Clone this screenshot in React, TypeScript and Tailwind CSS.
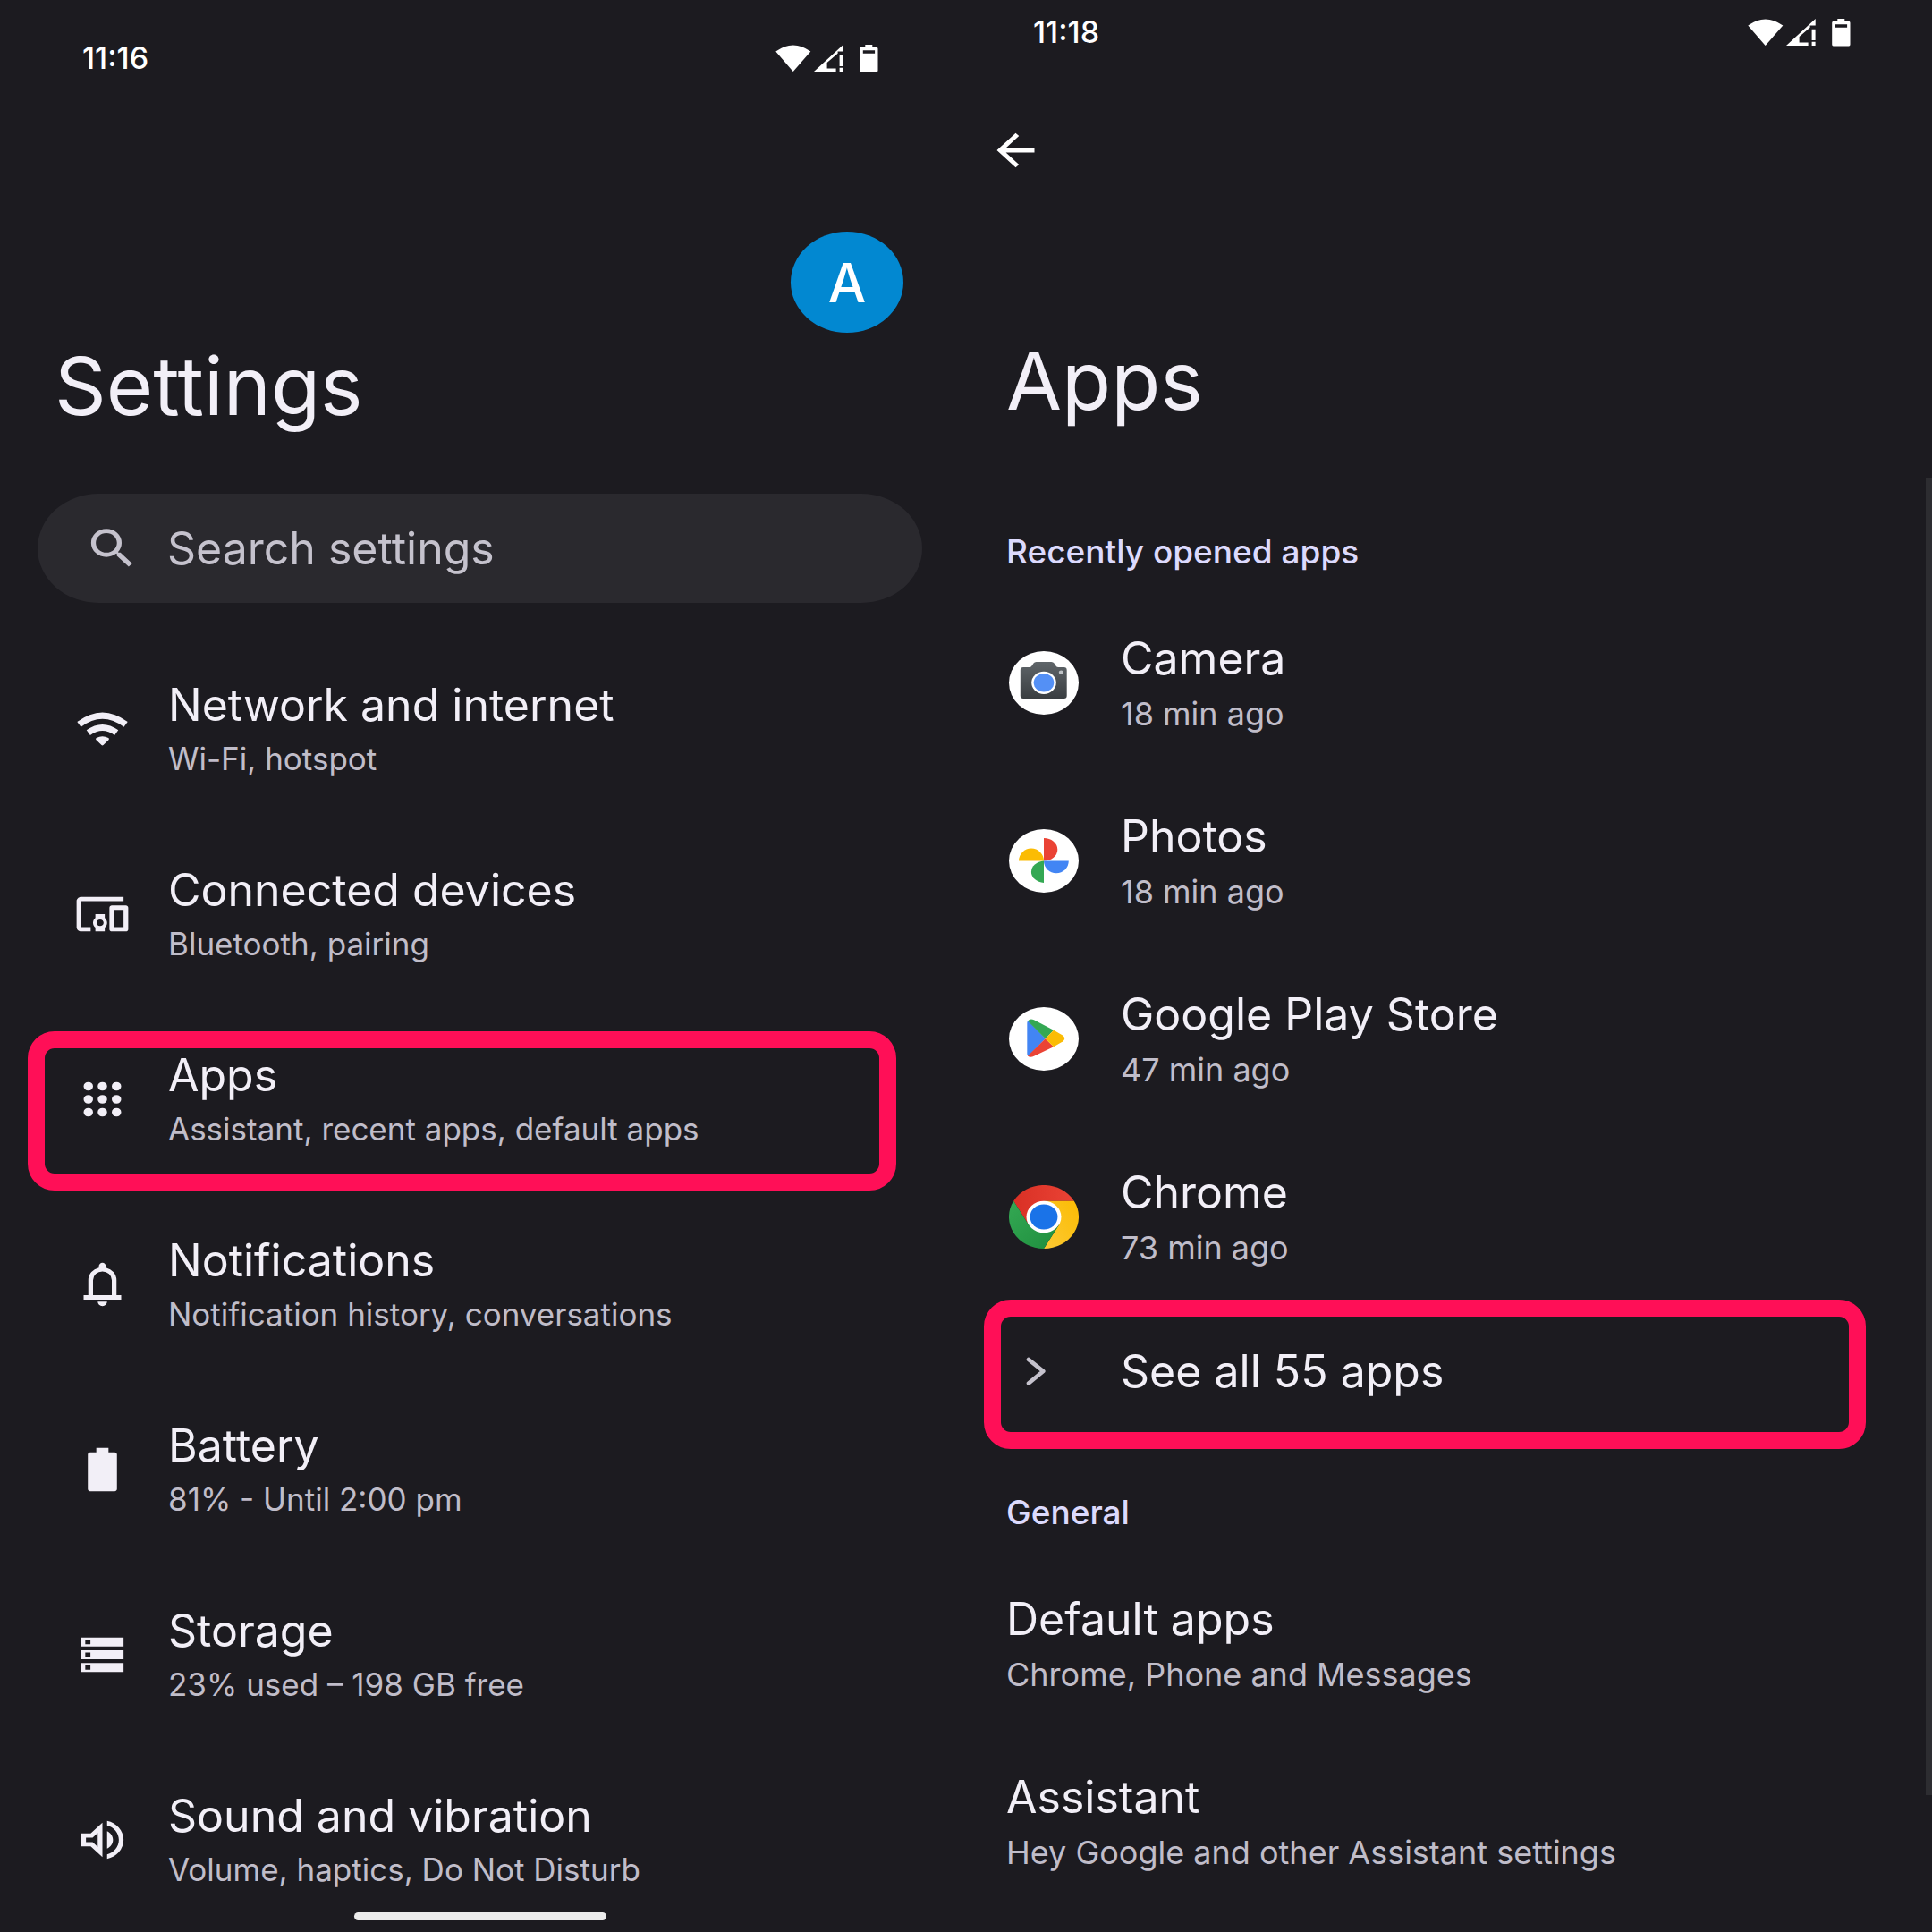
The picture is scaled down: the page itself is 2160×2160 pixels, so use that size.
import type { ReactNode } from "react";

function Glyph({ d }: { d: string }) {
  return (
    <svg viewBox="0 0 24 24" preserveAspectRatio="none" className="h-[58px] w-[63px] shrink-0 fill-current" aria-hidden="true">
      <path fillRule="evenodd" d={d} />
    </svg>
  );
}

function WifiGlyph() {
  return (
    <svg viewBox="-3 -11 63 58" className="h-[58px] w-[63px] shrink-0" fill="none" stroke="currentColor" aria-hidden="true">
      <path d="M2.4 12.9Q28.5-6.7 54.600 12.900" strokeWidth="7" />
      <path d="M12.8 22.2Q28.5 10.800 44.200 22.200" strokeWidth="7" />
      <path d="M22.5 29.2Q28.5 26 34.5 29.2L28.5 35Z" fill="currentColor" strokeWidth="2.8" strokeLinejoin="round" />
    </svg>
  );
}

const glyphs = {
  search:
    "M15.5 14h-.79l-.28-.27A6.471 6.471 0 0 0 16 9.5 6.5 6.5 0 1 0 9.5 16c1.61 0 3.09-.59 4.23-1.57l.27.28v.79l5 4.99L20.49 19l-4.99-5zm-6 0C7.01 14 5 11.99 5 9.5S7.01 5 9.5 5 14 7.01 14 9.5 11.99 14 9.5 14z",
  back: "M20 11H7.83l5.59-5.59L12 4l-8 8 8 8 1.41-1.41L7.83 13H20v-2z",
  devices:
    "M3 6h18V4H3c-1.1 0-2 .9-2 2v12c0 1.1.9 2 2 2h4v-2H3V6zm10 6H9v1.78c-.61.55-1 1.33-1 2.22s.39 1.67 1 2.22V20h4v-1.78c.61-.55 1-1.34 1-2.22s-.39-1.67-1-2.22V12zm-2 5.5c-.83 0-1.5-.67-1.5-1.5s.67-1.5 1.5-1.5 1.5.67 1.5 1.5-.67 1.5-1.5 1.5zM22 8h-6c-.5 0-1 .5-1 1v10c0 .5.5 1 1 1h6c.5 0 1-.5 1-1V9c0-.5-.5-1-1-1zm-1 10h-4v-8h4v8z",
  apps:
    "M6 4a2 2 0 1 0 0 4 2 2 0 0 0 0-4zm6 0a2 2 0 1 0 0 4 2 2 0 0 0 0-4zm6 0a2 2 0 1 0 0 4 2 2 0 0 0 0-4zM6 10a2 2 0 1 0 0 4 2 2 0 0 0 0-4zm6 0a2 2 0 1 0 0 4 2 2 0 0 0 0-4zm6 0a2 2 0 1 0 0 4 2 2 0 0 0 0-4zM6 16a2 2 0 1 0 0 4 2 2 0 0 0 0-4zm6 0a2 2 0 1 0 0 4 2 2 0 0 0 0-4zm6 0a2 2 0 1 0 0 4 2 2 0 0 0 0-4z",
  bell:
    "M4 19v-2h2v-7q0-2.075 1.25-3.687T10.5 4.2v-.7q0-.625.438-1.062T12 2t1.063.438T13.5 3.5v.7q2 .5 3.25 2.113T18 10v7h2v2ZM12 22q-.825 0-1.412-.587T10 20h4q0 .825-.587 1.413T12 22Zm-4-5h8v-7q0-1.65-1.175-2.825T12 6 9.175 7.175 8 10Z",
  battery:
    "M17.2 4H14.6V2H9.4v2H6.8C6.25 4 5.8 4.45 5.8 5v16c0 .55.45 1 1 1h10.4c.55 0 1-.45 1-1V5c0-.55-.45-1-1-1z",
  storage:
    "M3 4h18v4.2H3zM4.7 5.1v2h2.2v-2zM3 9.9h18v4.2H3zM4.7 11v2h2.2v-2zM3 15.8h18V20H3zM4.7 16.9v2h2.2v-2z",
  sound:
    "M3 9v6h4l5 5V4L7 9H3zm7-.17v6.34L7.83 13H5v-2h2.83L10 8.83zM16.5 12c0-1.77-1.02-3.29-2.5-4.03v8.05c1.48-.73 2.5-2.25 2.5-4.02zM14 3.23v2.06c2.89.86 5 3.54 5 6.71s-2.11 5.85-5 6.71v2.06c4.01-.91 7-4.49 7-8.77s-2.99-7.86-7-8.77z",
};

function StatusBar({ time }: { time: string }) {
  return (
    <header className="flex h-[50px] items-center justify-between text-white">
      <time className="text-[34px] leading-[48px] font-medium">{time}</time>
      <div className="flex items-center" aria-hidden="true">
        <svg viewBox="0 0 40 30" className="h-[30px] w-[40px] fill-current">
          <path d="M.3 7.6Q19.7-6.6 39.3 7.6L19.7 30Z" />
        </svg>
        <svg viewBox="0 0 33 30" className="ml-[3px] h-[30px] w-[33px] fill-current">
          <path d="M0 30 32.7 0v7.400H26.600v2.400L14.600 20v6.400h10V30ZM28.600 11.700h4V24h-4zM28.600 25.800h4V30h-4z" />
        </svg>
        <svg viewBox="0 0 21 31" className="ml-[18px] h-[31px] w-[21px] fill-current">
          <path fillRule="evenodd" d="M6.3 0h8v2.8h4.6Q20.5 2.8 20.5 4.4v24.4Q20.5 30.5 19 30.5H1.7Q.2 30.5.2 28.8V4.4Q.2 2.8 1.8 2.8h4.5ZM3.8 6.2v3.6h13.3V6.2Z" />
        </svg>
      </div>
    </header>
  );
}

function Highlight({ className }: { className: string }) {
  return <span className={`pointer-events-none absolute rounded-[30px] border-[19px] border-[#ff0f57] ${className}`} />;
}

type Setting = { title: string; detail: string; icon: ReactNode; marked?: boolean };

const settings: Setting[] = [
  { title: "Network and internet", detail: "Wi-Fi, hotspot", icon: <WifiGlyph /> },
  { title: "Connected devices", detail: "Bluetooth, pairing", icon: <Glyph d={glyphs.devices} /> },
  { title: "Apps", detail: "Assistant, recent apps, default apps", icon: <Glyph d={glyphs.apps} />, marked: true },
  { title: "Notifications", detail: "Notification history, conversations", icon: <Glyph d={glyphs.bell} /> },
  { title: "Battery", detail: "81% - Until 2:00 pm", icon: <Glyph d={glyphs.battery} /> },
  { title: "Storage", detail: "23% used – 198 GB free", icon: <Glyph d={glyphs.storage} /> },
  { title: "Sound and vibration", detail: "Volume, haptics, Do Not Disturb", icon: <Glyph d={glyphs.sound} /> },
];

function SettingsScreen() {
  return (
    <section className="relative flex min-w-0 flex-1 flex-col pt-10">
      <div className="pr-[98px] pl-[92px]">
        <StatusBar time="11:16" />
      </div>
      <button type="button" aria-label="Account" className="mt-[169px] mr-[70px] flex h-[113px] w-[126px] items-center justify-center self-end rounded-[50%] bg-[#0288d1] text-[60px] leading-none font-medium text-white">
        A
      </button>
      <h1 className="mt-[6px] pl-[61px] text-[90px] leading-[108px]">Settings</h1>
      <label className="mt-[66px] mr-[49px] ml-[42px] flex h-[122px] items-center rounded-[68px/61px] bg-[#2a292e] pr-10 pl-[52px] text-[#c5c2cd]">
        <Glyph d={glyphs.search} />
        <input type="search" aria-label="Search settings" placeholder="Search settings" className="ml-[30px] min-w-0 flex-1 bg-transparent text-[50px] leading-[60px] outline-none placeholder:text-[#c5c2cd] placeholder:opacity-100" />
      </label>
      <ul className="mt-[37px]">
        {settings.map((s) => (
          <li key={s.title} className="relative">
            <a href="#" className="flex items-center py-[45px] pl-[83px]">
              {s.icon}
              <span className="ml-[42px] flex flex-col gap-1.5 pt-0.5">
                <span className="text-[50px] leading-[60px]">{s.title}</span>
                <span className="text-[35px] leading-[49px] text-[#c0bdc9]">{s.detail}</span>
              </span>
            </a>
            {s.marked && <Highlight className="top-[28px] right-[78px] bottom-[1px] left-[31px]" />}
          </li>
        ))}
      </ul>
      <div className="absolute bottom-[13px] left-1/2 ml-[-144px] h-[9px] w-[282px] rounded-full bg-[#ececec]" />
    </section>
  );
}

function AppIcon({ children, viewBox = "0 0 78 71" }: { children: ReactNode; viewBox?: string }) {
  return (
    <svg viewBox={viewBox} preserveAspectRatio="none" className="h-[71px] w-[78px] shrink-0" aria-hidden="true">
      {children}
    </svg>
  );
}

function CameraIcon() {
  return (
    <AppIcon>
      <defs>
        <linearGradient id="cam" x1="0" y1="0" x2="0" y2="1">
          <stop offset="0" stopColor="#5f6569" />
          <stop offset="1" stopColor="#3a3e41" />
        </linearGradient>
      </defs>
      <ellipse cx="39" cy="35.5" rx="39" ry="35.5" fill="#fff" />
      <path fill="url(#cam)" d="M16 18h6.5q2 0 3-1.5l2-3q1-1.5 3-1.5h17q2 0 3 1.5l2 3q1 1.5 3 1.5h6q3.2 0 3.2 3.2v28.6q0 3.2-3.2 3.2H16q-3.2 0-3.2-3.2V21.2Q12.8 18 16 18Z" />
      <ellipse cx="39" cy="35.3" rx="13.8" ry="12.6" fill="#fff" />
      <ellipse cx="39" cy="35.3" rx="11.3" ry="10.3" fill="#5490f5" />
      <ellipse cx="58.3" cy="23.7" rx="2.5" ry="2.3" fill="#bfc3c6" />
    </AppIcon>
  );
}

function PhotosIcon() {
  return (
    <AppIcon>
      <ellipse cx="39" cy="35.5" rx="39" ry="35.5" fill="#fff" />
      <path fill="#ea4335" d="M39 9.9A15.3 12.8 0 0 1 39 35.5Z" />
      <path fill="#fbbc04" d="M11 35.5A14 13.9 0 0 1 39 35.5Z" />
      <path fill="#4285f4" d="M39 35.5H66.8A13.9 13.7 0 0 1 39 35.5Z" />
      <path fill="#34a853" d="M39 35.5V60A15.5 12.3 0 0 1 39 35.5Z" />
    </AppIcon>
  );
}

function PlayIcon() {
  return (
    <AppIcon>
      <ellipse cx="39" cy="35.5" rx="39" ry="35.5" fill="#fff" />
      <path fill="#4285f4" d="M21.5 15Q20.3 16 20.3 18v34q0 2 1.2 3L40.7 35.3Z" />
      <path fill="#34a853" d="M21 15.5q2.5-3.4 7-1.3L50 25.7 40.7 35.3Z" />
      <path fill="#ea4335" d="M21 54.5q2.5 2.5 7 .3L50 44.3 40.7 35.3Z" />
      <path fill="#fbbc04" d="M50 25.7l10 5.800q4.500 3.500 0 7L50 44.300 40.700 35.300Z" />
    </AppIcon>
  );
}

function ChromeIcon() {
  return (
    <AppIcon viewBox="0 0 48 48">
      <defs>
        <linearGradient id="cr" x1="0" x2="1"><stop offset="0" stopColor="#d93025" /><stop offset="1" stopColor="#ea4335" /></linearGradient>
        <linearGradient id="cg" x1="0" y1="0" x2="1" y2="1"><stop offset="0" stopColor="#34a853" /><stop offset="1" stopColor="#1e8e3e" /></linearGradient>
        <linearGradient id="cy" x1="0" y1="1" x2="1" y2="0"><stop offset="0" stopColor="#fcc934" /><stop offset="1" stopColor="#fbbc04" /></linearGradient>
      </defs>
      <path fill="url(#cr)" d="M24 12H44.8A24 24 0 0 0 3.2 12L13.6 30 24 24Z" />
      <path fill="url(#cy)" d="M24 12H44.8A24 24 0 0 1 24 48L34.4 30 24 24Z" />
      <path fill="url(#cg)" d="M13.6 30 3.2 12A24 24 0 0 0 24 48L34.4 30 24 24Z" />
      <circle cx="24" cy="24" r="12" fill="#fff" />
      <circle cx="24" cy="24" r="9.5" fill="#1a73e8" />
    </AppIcon>
  );
}

type AppEntry = { title: string; detail: string; icon?: ReactNode };

const recentApps: AppEntry[] = [
  { title: "Camera", detail: "18 min ago", icon: <CameraIcon /> },
  { title: "Photos", detail: "18 min ago", icon: <PhotosIcon /> },
  { title: "Google Play Store", detail: "47 min ago", icon: <PlayIcon /> },
  { title: "Chrome", detail: "73 min ago", icon: <ChromeIcon /> },
];

const generalItems: AppEntry[] = [
  { title: "Default apps", detail: "Chrome, Phone and Messages" },
  { title: "Assistant", detail: "Hey Google and other Assistant settings" },
];

function AppRow({ title, detail, icon }: AppEntry) {
  return (
    <li>
      <a href="#" className="flex items-center py-10">
        {icon && <span className="mr-[47px] ml-[3px]">{icon}</span>}
        <span className="flex flex-col gap-2 pt-0.5">
          <span className="text-[50px] leading-[60px]">{title}</span>
          <span className="text-[36px] leading-[49px] text-[#c0bdc9]">{detail}</span>
        </span>
      </a>
    </li>
  );
}

function SectionTitle({ children, className }: { children: ReactNode; className: string }) {
  return <h2 className={`mb-[23px] text-[37px] leading-[48px] font-medium text-[#dcdafd] ${className}`}>{children}</h2>;
}

function AppsScreen() {
  return (
    <section className="relative flex min-w-0 flex-1 flex-col pt-[11px]">
      <div className="pr-[91px] pl-[75px]">
        <StatusBar time="11:18" />
      </div>
      <button type="button" aria-label="Navigate up" className="mt-[78px] ml-[24px] self-start text-white">
        <Glyph d={glyphs.back} />
      </button>
      <div className="mt-[175px] pl-[45px]">
        <h1 className="text-[90px] leading-[108px]">Apps</h1>
        <SectionTitle className="mt-[113px]">Recently opened apps</SectionTitle>
        <ul>
          {recentApps.map((a) => (
            <AppRow key={a.title} {...a} />
          ))}
        </ul>
        <div className="relative mt-px">
          <a href="#" className="flex items-center py-[42px]">
            <span className="mr-[47px] ml-[3px] flex w-[78px] pl-[19px]">
              <svg viewBox="0 0 22 32" className="h-8 w-[22px]" fill="none" stroke="#c5c2cd" strokeWidth="4.6" strokeLinecap="round" strokeLinejoin="round" aria-hidden="true">
                <path d="M3 3 19.3 16 3 29.5" />
              </svg>
            </span>
            <span className="text-[50px] leading-[60px]">See all 55 apps</span>
          </a>
          <Highlight className="top-[-8px] right-[74px] bottom-[-15px] left-[-25px]" />
        </div>
        <SectionTitle className="mt-[62px]">General</SectionTitle>
        <ul>
          {generalItems.map((a) => (
            <AppRow key={a.title} {...a} />
          ))}
        </ul>
      </div>
      <div className="absolute top-[534px] right-0 bottom-[153px] w-[7px] bg-[#2d2d31]" />
    </section>
  );
}

export default function App() {
  return (
    <main className="flex min-h-screen bg-[#1c1b20] font-['Inter',sans-serif] text-[#f2eff7]">
      <SettingsScreen />
      <AppsScreen />
    </main>
  );
}
